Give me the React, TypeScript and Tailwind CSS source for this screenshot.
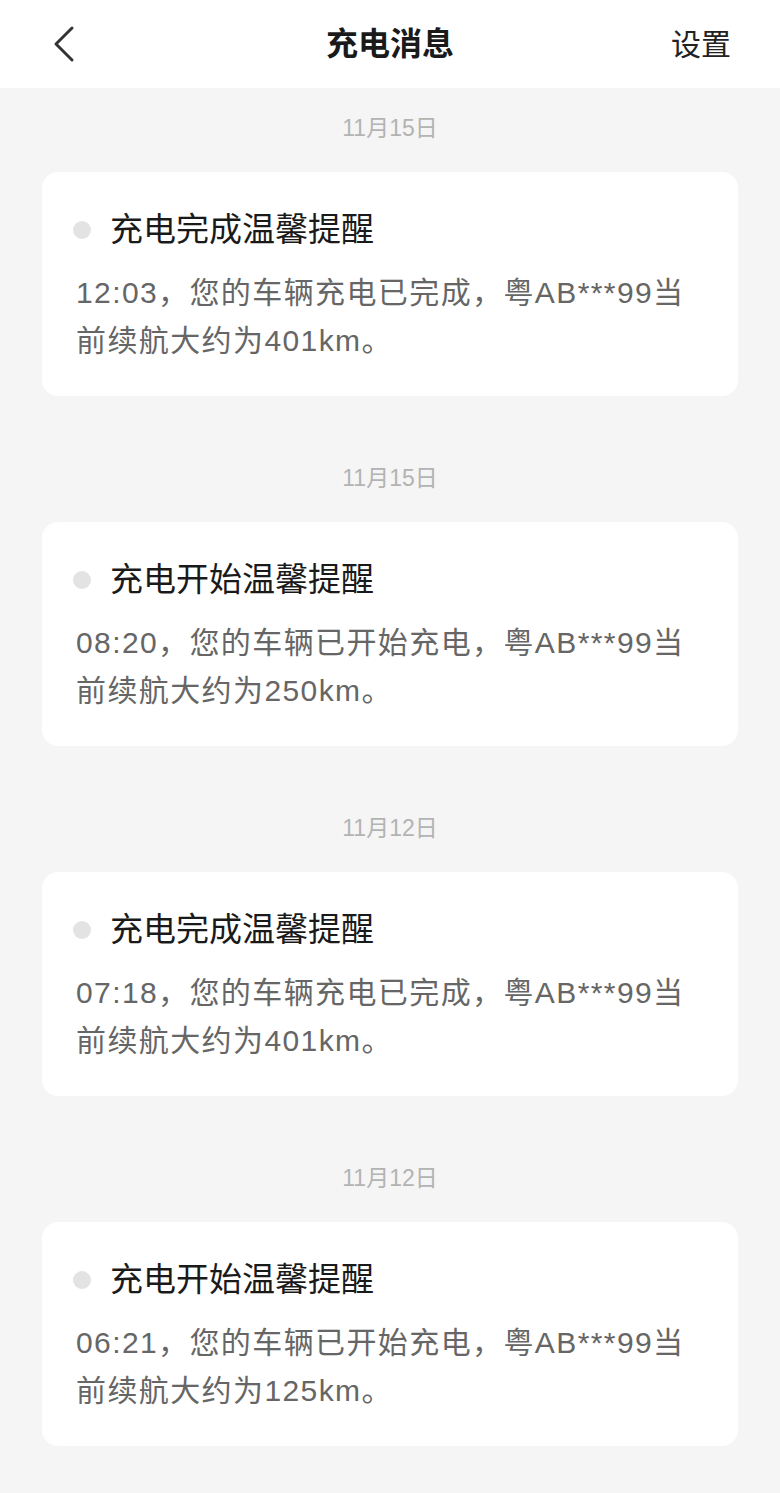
import React from 'react'

const messages = [
  { date: '11月15日', title: '充电完成温馨提醒', body: '12:03，您的车辆充电已完成，粤AB***99当前续航大约为401km。' },
  { date: '11月15日', title: '充电开始温馨提醒', body: '08:20，您的车辆已开始充电，粤AB***99当前续航大约为250km。' },
  { date: '11月12日', title: '充电完成温馨提醒', body: '07:18，您的车辆充电已完成，粤AB***99当前续航大约为401km。' },
  { date: '11月12日', title: '充电开始温馨提醒', body: '06:21，您的车辆已开始充电，粤AB***99当前续航大约为125km。' },
]

const font = { fontFamily: '"Liberation Sans", "Noto Sans CJK SC", sans-serif' }

const App = () => {
  return (
    <div className="min-h-[1493px] w-[780px] bg-[#f5f5f5]" style={font}>
      {/* Header */}
      <div className="h-[88px] bg-white flex items-center justify-between px-[48px] relative">
        <svg width="30" height="40" viewBox="0 0 30 40" className="ml-[2px]">
          <polyline points="22,4 6,20 22,36" fill="none" stroke="#333" strokeWidth="3" strokeLinecap="round" strokeLinejoin="round" />
        </svg>
        <div className="absolute left-0 right-0 text-center text-[32px] font-bold text-[#1a1a1a] pointer-events-none">
          充电消息
        </div>
        <div className="text-[30px] text-[#222] mr-[1px]">设置</div>
      </div>

      {/* List */}
      <div className="px-[42px]">
        {messages.map((m, i) => (
          <div key={i} className={i === 0 ? 'pt-[26px]' : 'pt-[68px]'}>
            <div className="h-[28px] leading-[28px] text-center text-[23px] text-[#b3b3b3]">{m.date}</div>
            <div className="mt-[30px] h-[224px] bg-white rounded-[16px] pt-[36px] pl-[34px] pr-[30px]">
              <div className="flex items-center h-[44px]">
                <span className="w-[18px] h-[18px] rounded-full bg-[#e3e3e3] shrink-0 ml-[-3px]" />
                <span className="ml-[19px] text-[33px] text-[#1a1a1a] leading-[44px]">{m.title}</span>
              </div>
              <p className="mt-[17px] w-[620px] text-[30px] leading-[48px] tracking-[1.4px] text-[#666666]">{m.body}</p>
            </div>
          </div>
        ))}
      </div>
    </div>
  )
}

export default App
